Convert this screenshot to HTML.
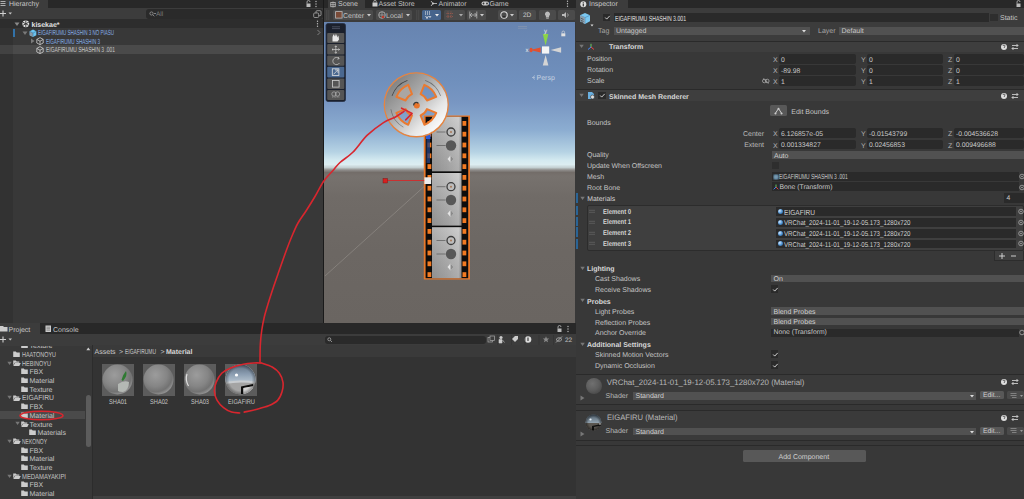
<!DOCTYPE html>
<html><head><meta charset="utf-8">
<style>
*{margin:0;padding:0;box-sizing:border-box}
html,body{width:1024px;height:499px;overflow:hidden;background:#1a1a1a;font-family:"Liberation Sans",sans-serif;font-size:7px;color:#c4c4c4;text-rendering:geometricPrecision}
.a{position:absolute}
.t{position:absolute;white-space:nowrap;line-height:1}
svg{position:absolute;overflow:visible}
</style></head><body>

<div class="a" style="left:0px;top:0px;width:323px;height:323px;background:#383838;"></div>
<div class="a" style="left:0px;top:0px;width:323px;height:8px;background:#282828;"></div>
<div class="a" style="left:0px;top:0px;width:48px;height:8px;background:#3c3c3c;"></div>
<svg style="left:0;top:0" width="8" height="8"><path d="M0.5 1.5h5M0.5 3.5h5M0.5 5.5h5" stroke="#bbb" stroke-width="0.9"/></svg>
<div class="t" style="left:9px;top:1.35px;font-size:7px;color:#c8c8c8;font-weight:400;">Hierarchy</div>
<svg style="left:305px;top:0" width="20" height="8"><path d="M2 3.5v-1.5a1.5 1.5 0 0 1 3 0" stroke="#bbb" stroke-width="0.8" fill="none"/><rect x="1.5" y="3.5" width="4" height="3.5" fill="#bbb"/><circle cx="11" cy="1.5" r="0.7" fill="#bbb"/><circle cx="11" cy="4" r="0.7" fill="#bbb"/><circle cx="11" cy="6.5" r="0.7" fill="#bbb"/></svg>
<div class="a" style="left:0px;top:8px;width:323px;height:11px;background:#3c3c3c;"></div>
<svg style="left:0;top:9px" width="14" height="10"><path d="M0 4.5h6M3 1.5v6" stroke="#d0d0d0" stroke-width="1.1"/><path d="M8.5 3.5h3.5l-1.75 2z" fill="#c8c8c8"/></svg>
<div class="a" style="left:146px;top:9px;width:177px;height:9.5px;background:#2a2a2a;border-radius:3px"></div>
<svg style="left:149px;top:11px" width="8" height="6"><circle cx="2.5" cy="2.5" r="1.6" stroke="#999" stroke-width="0.8" fill="none"/><path d="M3.8 3.8l1.5 1.5M5 2.5h2" stroke="#999" stroke-width="0.8"/></svg>
<div class="t" style="left:156px;top:11.92px;font-size:6.5px;color:#7a7a7a;font-weight:400;">All</div>
<svg style="left:313px;top:10px" width="9" height="8"><rect x="3" y="0.7" width="5" height="5" stroke="#aaa" stroke-width="0.8" fill="none" rx="1"/><rect x="0.7" y="3" width="5" height="4.5" stroke="#aaa" stroke-width="0.8" fill="#2a2a2a" rx="1"/></svg>
<div class="a" style="left:0px;top:19px;width:323px;height:8.5px;background:#2d2d2d;"></div>
<div class="a" style="left:0px;top:44.7px;width:323px;height:9px;background:#4a4a4a;"></div>
<div class="a" style="left:0px;top:27.5px;width:13px;height:295.5px;background:rgba(0,0,0,0.1);"></div>
<svg style="left:14px;top:21px" width="6" height="6"><path d="M0.5 1.5h5l-2.5 3.5z" fill="#8a8a8a"/></svg>
<svg style="left:22px;top:20px" width="8" height="8"><circle cx="3.8" cy="3.8" r="3.4" fill="#e8e8e8"/><path d="M3.8 0.6v6.4M0.8 2.2l6 3.2M0.8 5.4l6-3.2" stroke="#333" stroke-width="0.9"/></svg>
<div class="t" style="left:31.5px;top:21.55px;font-size:7px;color:#e4e4e4;font-weight:700;">kisekae*</div>
<svg style="left:315.5px;top:20px" width="4" height="8"><circle cx="1.5" cy="1.3" r="0.7" fill="#bbb"/><circle cx="1.5" cy="3.8" r="0.7" fill="#bbb"/><circle cx="1.5" cy="6.3" r="0.7" fill="#bbb"/></svg>
<div class="a" style="left:13.3px;top:29px;width:1.3px;height:7.5px;background:#3272a8;"></div>
<svg style="left:22px;top:30px" width="6" height="6"><path d="M0.5 1.5h5l-2.5 3.5z" fill="#7a7a7a"/></svg>
<svg style="left:29px;top:28.5px" width="8" height="8"><path d="M4 0.5l3.3 1.8v3.9L4 8 0.7 6.2V2.3z" fill="#6cc4f0"/><path d="M0.7 2.3L4 4.1V8L0.7 6.2z" fill="#8a9aa8"/><path d="M0.7 2.3L4 4.1l3.3-1.8M4 4.1V8" stroke="#2f6f9c" stroke-width="0.5" fill="none"/></svg>
<svg style="left:38px;top:0px" width="78" height="38.06"><text x="0" y="35.06" textLength="76" lengthAdjust="spacingAndGlyphs" font-family="Liberation Sans" font-size="7.4" font-weight="400" fill="#86aee6">EIGAFIRUMU  SHASHIN 3 NO PIASU</text></svg>
<svg style="left:316px;top:29px" width="6" height="7"><path d="M1.5 1l2.5 2.5-2.5 2.5" stroke="#888" stroke-width="0.9" fill="none"/></svg>
<svg style="left:30px;top:38px" width="6" height="6"><path d="M1 0.5v5l3.5-2.5z" fill="#7a7a7a"/></svg>
<svg style="left:36px;top:37px" width="8" height="8"><path d="M4 0.6l3.2 1.8v3.6L4 7.6 0.8 6V2.4z M0.8 2.4L4 4.2l3.2-1.8M4 4.2v3.4" stroke="#d0d0d0" stroke-width="0.8" fill="none"/></svg>
<svg style="left:46px;top:0px" width="56" height="46.66"><text x="0" y="43.66" textLength="54" lengthAdjust="spacingAndGlyphs" font-family="Liberation Sans" font-size="7.4" font-weight="400" fill="#86aee6">EIGAFIRUMU  SHASHIN 3</text></svg>
<svg style="left:36px;top:45.5px" width="8" height="8"><path d="M4 0.6l3.2 1.8v3.6L4 7.6 0.8 6V2.4z M0.8 2.4L4 4.2l3.2-1.8M4 4.2v3.4" stroke="#d0d0d0" stroke-width="0.8" fill="none"/></svg>
<svg style="left:46px;top:0px" width="71" height="55.36"><text x="0" y="52.36" textLength="69" lengthAdjust="spacingAndGlyphs" font-family="Liberation Sans" font-size="7.4" font-weight="400" fill="#c8c8c8">EIGAFIRUMU  SHASHIN 3 .001</text></svg>
<div class="a" style="left:324px;top:0px;width:252px;height:323px;background:#383838;"></div>
<div class="a" style="left:324px;top:0px;width:252px;height:8px;background:#282828;"></div>
<div class="a" style="left:328.4px;top:0px;width:36.6px;height:8px;background:#3c3c3c;"></div>
<svg style="left:329.5px;top:0.5px" width="6" height="7"><rect x="0.8" y="1.5" width="4.4" height="4.2" fill="none" stroke="#bbb" stroke-width="0.8"/><path d="M3 0.5v6M0.3 3.6h5.4" stroke="#bbb" stroke-width="0.7"/></svg>
<div class="t" style="left:338px;top:1.35px;font-size:7px;color:#c8c8c8;font-weight:400;">Scene</div>
<svg style="left:372px;top:0" width="6" height="7"><path d="M0.5 2.5h5v4h-5z" fill="#ccc"/><path d="M1.8 2.5v-1a1.2 1.2 0 0 1 2.4 0v1" stroke="#ccc" stroke-width="0.7" fill="none"/></svg>
<div class="t" style="left:378.5px;top:1.35px;font-size:7px;color:#c0c0c0;font-weight:400;">Asset Store</div>
<svg style="left:430px;top:0" width="8" height="7"><path d="M1 1l2 2.5M3 3.5L1 6M3 3.5h4" stroke="#ccc" stroke-width="0.8" fill="none"/><circle cx="3" cy="3.5" r="1" fill="#ccc"/></svg>
<div class="t" style="left:438.5px;top:1.35px;font-size:7px;color:#c0c0c0;font-weight:400;">Animator</div>
<svg style="left:481px;top:0" width="9" height="7"><rect x="0.5" y="1.5" width="7.5" height="4" rx="2" fill="#ccc"/><circle cx="2.5" cy="3.5" r="0.9" fill="#333"/><circle cx="6" cy="3.5" r="0.9" fill="#333"/></svg>
<div class="t" style="left:489.5px;top:1.35px;font-size:7px;color:#c0c0c0;font-weight:400;">Game</div>
<svg style="left:566px;top:0" width="4" height="8"><circle cx="1.5" cy="1.3" r="0.7" fill="#bbb"/><circle cx="1.5" cy="3.8" r="0.7" fill="#bbb"/><circle cx="1.5" cy="6.3" r="0.7" fill="#bbb"/></svg>
<div class="a" style="left:324px;top:8px;width:252px;height:14px;background:#3c3c3c;"></div>
<svg style="left:326px;top:10px" width="4" height="10"><path d="M0.8 0v10M2.8 0v10" stroke="#555" stroke-width="0.7"/></svg>
<div class="a" style="left:333px;top:9.5px;width:40px;height:10.5px;background:#4b4b4b;border-radius:1.5px"></div>
<svg style="left:335px;top:11px" width="8" height="8"><rect x="0.6" y="0.6" width="6.5" height="6.5" stroke="#bbb" stroke-width="0.8" fill="#7a4b38"/></svg>
<div class="t" style="left:343px;top:12.95px;font-size:7px;color:#c0c0c0;font-weight:400;">Center</div>
<svg style="left:367px;top:13.5px" width="5" height="3"><path d="M0 0h4l-2 2.5z" fill="#ccc"/></svg>
<div class="a" style="left:375.5px;top:9.5px;width:36.5px;height:10.5px;background:#4b4b4b;border-radius:1.5px"></div>
<svg style="left:377.5px;top:10.5px" width="9" height="9"><circle cx="4" cy="4" r="3.3" stroke="#bbb" stroke-width="0.8" fill="none"/><path d="M1 4h6M4 1v6" stroke="#bbb" stroke-width="0.6"/><circle cx="5" cy="6" r="1.3" fill="#c0392b"/></svg>
<div class="t" style="left:386px;top:12.95px;font-size:7px;color:#c0c0c0;font-weight:400;">Local</div>
<svg style="left:406px;top:13.5px" width="5" height="3"><path d="M0 0h4l-2 2.5z" fill="#ccc"/></svg>
<svg style="left:416px;top:10px" width="4" height="10"><path d="M0.8 0v10M2.8 0v10" stroke="#555" stroke-width="0.7"/></svg>
<div class="a" style="left:422px;top:9.5px;width:19px;height:10.5px;background:#46648c;border-radius:1.5px"></div>
<svg style="left:424px;top:11px" width="8" height="8"><path d="M1 1h1M3 1h1M5 1h1M1 3h1M3 3h1M5 3h1" stroke="#eee" stroke-width="1"/><path d="M1.5 5l1.5 2 1.5-2M3 7v1M5 5l1 1.5 1-1.5" stroke="#eee" stroke-width="0.8" fill="none"/></svg>
<svg style="left:435px;top:13.5px" width="5" height="3"><path d="M0 0h4l-2 2.5z" fill="#eee"/></svg>
<div class="a" style="left:444px;top:9.5px;width:21px;height:10.5px;background:#4b4b4b;border-radius:1.5px"></div>
<svg style="left:446px;top:11px" width="8" height="8"><path d="M2 0.5v7M5 0.5v7M0.5 2.5h7M0.5 5.5h7" stroke="#b06050" stroke-width="0.7" stroke-dasharray="1 0.8"/></svg>
<svg style="left:459px;top:13.5px" width="5" height="3"><path d="M0 0h4l-2 2.5z" fill="#aaa"/></svg>
<div class="a" style="left:467px;top:9.5px;width:19px;height:10.5px;background:#4b4b4b;border-radius:1.5px"></div>
<svg style="left:469px;top:11px" width="9" height="8"><path d="M0.8 0.5v7M7.8 0.5v7M0.8 4h7M3 2l-2 2 2 2M5.6 2l2 2-2 2" stroke="#bbb" stroke-width="0.8" fill="none"/></svg>
<svg style="left:480px;top:13.5px" width="5" height="3"><path d="M0 0h4l-2 2.5z" fill="#ccc"/></svg>
<div class="a" style="left:497.5px;top:9.5px;width:19.0px;height:10.5px;background:#4b4b4b;border-radius:1.5px"></div>
<svg style="left:499.5px;top:11px" width="9" height="8"><circle cx="4" cy="4" r="3.2" stroke="#ddd" stroke-width="1.1" fill="none"/><path d="M2 5.5a2.5 2.5 0 0 0 4 0" stroke="#555" stroke-width="1"/></svg>
<svg style="left:510px;top:13.5px" width="5" height="3"><path d="M0 0h4l-2 2.5z" fill="#ccc"/></svg>
<div class="a" style="left:518.7px;top:9.5px;width:17.699999999999932px;height:10.5px;background:#4b4b4b;border-radius:1.5px"></div>
<div class="t" style="left:523px;top:13.22px;font-size:6.5px;color:#c8c8c8;font-weight:400;">2D</div>
<div class="a" style="left:538.5px;top:9.5px;width:17.100000000000023px;height:10.5px;background:#4b4b4b;border-radius:1.5px"></div>
<svg style="left:543.5px;top:11px" width="7" height="8"><path d="M3.5 0.5a2.6 2.6 0 0 1 1.6 4.6v1.4H1.9V5.1A2.6 2.6 0 0 1 3.5 0.5z" fill="#bbb"/><path d="M2.2 7.3h2.6" stroke="#bbb" stroke-width="0.8"/></svg>
<div class="a" style="left:557.6px;top:9.5px;width:17.100000000000023px;height:10.5px;background:#4b4b4b;border-radius:1.5px"></div>
<svg style="left:561px;top:11px" width="10" height="8"><path d="M1 3h2l2-2v6L3 5H1z" fill="#bbb"/><path d="M6.5 2.5q1.5 1.5 0 3" stroke="#bbb" stroke-width="0.7" fill="none"/></svg>
<div class="a" style="left:324px;top:22px;width:251px;height:301px;overflow:hidden;background:linear-gradient(#6784b0 0px,#7090bd 60px,#7896c2 80px,#8cadd1 108px,#b6d3e4 130px,#d3e9f0 138px,#dcedf1 142.5px,#c4d0d2 145.5px,#8f8d8b 148px,#736d69 150.5px,#77726e 154px,#706b67 175px,#6c6763 230px,#6a6561 301px)">
</div>
<svg style="left:0;top:0" width="1024" height="499" viewBox="0 0 1024 499"><defs><linearGradient id="disc" x1="0.1" y1="0.1" x2="0.9" y2="0.9"><stop offset="0" stop-color="#7e7e7e"/><stop offset="0.4" stop-color="#ababab"/><stop offset="0.75" stop-color="#e6e6e6"/><stop offset="1" stop-color="#ffffff"/></linearGradient><linearGradient id="frame" x1="0" y1="0" x2="1" y2="0"><stop offset="0" stop-color="#a4a4a4"/><stop offset="0.5" stop-color="#b4b4b4"/><stop offset="0.9" stop-color="#c4c4c4"/><stop offset="1" stop-color="#9a9a9a"/></linearGradient><linearGradient id="framev" x1="0" y1="0" x2="0" y2="1"><stop offset="0" stop-color="#fff" stop-opacity="0.15"/><stop offset="1" stop-color="#000" stop-opacity="0.12"/></linearGradient></defs><path d="M428 183L325 276" stroke="#a9a49f" stroke-width="0.6" opacity="0.7"/><rect x="423.8" y="115.5" width="46.2" height="164" fill="#e8792c"/><rect x="425.6" y="116.8" width="42.6" height="161.4" fill="#0c0c0c"/><rect x="432" y="116.8" width="29.5" height="54.500000000000014" fill="url(#frame)"/><rect x="432" y="116.8" width="29.5" height="54.500000000000014" fill="url(#framev)"/><rect x="432" y="173" width="29.5" height="52.599999999999994" fill="url(#frame)"/><rect x="432" y="173" width="29.5" height="52.599999999999994" fill="url(#framev)"/><rect x="432" y="227.2" width="29.5" height="51.0" fill="url(#frame)"/><rect x="432" y="227.2" width="29.5" height="51.0" fill="url(#framev)"/><path d="M436.5 132h9M436.5 145.5h9" stroke="#4a4a4a" stroke-width="0.6"/><circle cx="451" cy="132" r="4" fill="#bcbcbc" stroke="#3c3c3c" stroke-width="1.3"/><circle cx="451" cy="132" r="1" fill="#a87858"/><circle cx="451" cy="145.5" r="5.2" fill="#575757"/><path d="M450.5 155.5l3 3.5-3 3.5-3-3.5z" fill="#e4e4e4"/><path d="M450.5 155.5l3 3.5-3 3.5z" fill="#8a8a8a"/><path d="M436.5 186.7h9M436.5 200h9" stroke="#4a4a4a" stroke-width="0.6"/><circle cx="451" cy="186.7" r="4" fill="#bcbcbc" stroke="#3c3c3c" stroke-width="1.3"/><circle cx="451" cy="186.7" r="1" fill="#a87858"/><circle cx="451" cy="200" r="5.2" fill="#575757"/><path d="M450.5 209.9l3 3.5-3 3.5-3-3.5z" fill="#e4e4e4"/><path d="M450.5 209.9l3 3.5-3 3.5z" fill="#8a8a8a"/><path d="M436.5 240.5h9M436.5 254h9" stroke="#4a4a4a" stroke-width="0.6"/><circle cx="451" cy="240.5" r="4" fill="#bcbcbc" stroke="#3c3c3c" stroke-width="1.3"/><circle cx="451" cy="240.5" r="1" fill="#a87858"/><circle cx="451" cy="254" r="5.2" fill="#575757"/><path d="M450.5 263.5l3 3.5-3 3.5-3-3.5z" fill="#e4e4e4"/><path d="M450.5 263.5l3 3.5-3 3.5z" fill="#8a8a8a"/><rect x="427.5" y="121.00" width="3.8" height="4.8" fill="#f27a22"/><rect x="462.5" y="121.00" width="3.8" height="4.8" fill="#f27a22"/><rect x="427.5" y="131.80" width="3.8" height="4.8" fill="#f27a22"/><rect x="462.5" y="131.80" width="3.8" height="4.8" fill="#f27a22"/><rect x="427.5" y="142.60" width="3.8" height="4.8" fill="#f27a22"/><rect x="462.5" y="142.60" width="3.8" height="4.8" fill="#f27a22"/><rect x="427.5" y="153.40" width="3.8" height="4.8" fill="#f27a22"/><rect x="462.5" y="153.40" width="3.8" height="4.8" fill="#f27a22"/><rect x="427.5" y="164.20" width="3.8" height="4.8" fill="#f27a22"/><rect x="462.5" y="164.20" width="3.8" height="4.8" fill="#f27a22"/><rect x="427.5" y="175.00" width="3.8" height="4.8" fill="#f27a22"/><rect x="462.5" y="175.00" width="3.8" height="4.8" fill="#f27a22"/><rect x="427.5" y="185.80" width="3.8" height="4.8" fill="#f27a22"/><rect x="462.5" y="185.80" width="3.8" height="4.8" fill="#f27a22"/><rect x="427.5" y="196.60" width="3.8" height="4.8" fill="#f27a22"/><rect x="462.5" y="196.60" width="3.8" height="4.8" fill="#f27a22"/><rect x="427.5" y="207.40" width="3.8" height="4.8" fill="#f27a22"/><rect x="462.5" y="207.40" width="3.8" height="4.8" fill="#f27a22"/><rect x="427.5" y="218.20" width="3.8" height="4.8" fill="#f27a22"/><rect x="462.5" y="218.20" width="3.8" height="4.8" fill="#f27a22"/><rect x="427.5" y="229.00" width="3.8" height="4.8" fill="#f27a22"/><rect x="462.5" y="229.00" width="3.8" height="4.8" fill="#f27a22"/><rect x="427.5" y="239.80" width="3.8" height="4.8" fill="#f27a22"/><rect x="462.5" y="239.80" width="3.8" height="4.8" fill="#f27a22"/><rect x="427.5" y="250.60" width="3.8" height="4.8" fill="#f27a22"/><rect x="462.5" y="250.60" width="3.8" height="4.8" fill="#f27a22"/><rect x="427.5" y="261.40" width="3.8" height="4.8" fill="#f27a22"/><rect x="462.5" y="261.40" width="3.8" height="4.8" fill="#f27a22"/><rect x="427.5" y="272.20" width="3.8" height="4.8" fill="#f27a22"/><rect x="462.5" y="272.20" width="3.8" height="4.8" fill="#f27a22"/><rect x="426" y="134" width="4.5" height="5" fill="#2a5ad8"/><rect x="426.5" y="139" width="3.5" height="24" fill="#24407a" opacity="0.8"/><path d="M386 180.5H426" stroke="#d42a2a" stroke-width="0.9"/><rect x="383" y="178.5" width="4.5" height="4.5" fill="#d62020" stroke="#701010" stroke-width="0.4"/><rect x="424.4" y="177.3" width="6.8" height="6.7" fill="#ececec"/><circle cx="416.3" cy="104.8" r="31.9" fill="none" stroke="#e8843e" stroke-width="1.5"/><path d="M385.1 104.8a31.2 31.2 0 1 0 62.4 0a31.2 31.2 0 1 0 -62.4 0zM436.23 96.75A21.5 21.5 0 0 0 424.35 84.87L420.61 94.14A11.5 11.5 0 0 1 426.96 100.49zM396.37 112.85A21.5 21.5 0 0 0 408.25 124.73L411.99 115.46A11.5 11.5 0 0 1 405.64 109.11zM424.35 124.73A21.5 21.5 0 0 0 436.23 112.85L426.96 109.11A11.5 11.5 0 0 1 420.61 115.46z" fill="url(#disc)" fill-rule="evenodd"/><path d="M436.23 96.75A21.5 21.5 0 0 0 424.35 84.87L420.61 94.14A11.5 11.5 0 0 1 426.96 100.49z" fill="none" stroke="#ea7a30" stroke-width="2" stroke-linejoin="round"/><path d="M408.25 84.87A21.5 21.5 0 0 0 396.37 96.75L405.64 100.49A11.5 11.5 0 0 1 411.99 94.14z" fill="#aaa6a2" stroke="#ea7a30" stroke-width="2" stroke-linejoin="round"/><path d="M396.37 112.85A21.5 21.5 0 0 0 408.25 124.73L411.99 115.46A11.5 11.5 0 0 1 405.64 109.11z" fill="none" stroke="#ea7a30" stroke-width="2" stroke-linejoin="round"/><path d="M424.35 124.73A21.5 21.5 0 0 0 436.23 112.85L426.96 109.11A11.5 11.5 0 0 1 420.61 115.46z" fill="none" stroke="#ea7a30" stroke-width="2" stroke-linejoin="round"/><path d="M407.30 80.09A26.3 26.3 0 0 0 391.59 95.80L392.34 96.08A25.5 25.5 0 0 1 407.58 80.84z" fill="#444"/><path d="M441.01 95.80A26.3 26.3 0 0 0 425.30 80.09L425.02 80.84A25.5 25.5 0 0 1 440.26 96.08z" fill="#444" opacity="0.6"/><path d="M390.50 109.35A26.2 26.2 0 0 0 403.20 127.49L403.55 126.88A25.5 25.5 0 0 1 391.19 109.23z" fill="#444" opacity="0.6"/><circle cx="416.8" cy="105.6" r="3" fill="#e8742a"/><path d="M413.7 105.39999999999999a2.6 2.6 0 0 1 4.6 -2" stroke="#3a3a3a" stroke-width="1.4" fill="none"/><rect x="326" y="23.5" width="19.5" height="78" rx="2" fill="#1b202c" stroke="#263044" stroke-width="0.8"/><path d="M332 26.8h8M332 28.6h8" stroke="#5a6272" stroke-width="0.7"/><rect x="327.2" y="33" width="17.1" height="10" rx="1" fill="#585858"/><rect x="327.2" y="44" width="17.1" height="10.5" rx="1" fill="#555555"/><rect x="327.2" y="55.6" width="17.1" height="10.199999999999996" rx="1" fill="#555555"/><rect x="327.2" y="66.7" width="17.1" height="10.799999999999997" rx="1" fill="#4a6890"/><rect x="327.2" y="78.5" width="17.1" height="10.5" rx="1" fill="#555555"/><rect x="327.2" y="90" width="17.1" height="10" rx="1" fill="#555555"/><path d="M332.5 41.5v-4.5l1-3 1 2.5 0.5-3 1 3 0.8-2.5 0.7 3.5 1-2 0.5 4-1.5 2z" fill="#e8e8e8"/><path d="M335.8 45.8v7.5M332 49.5h7.6M335.8 45.8l-1 1.2M335.8 45.8l1 1.2M335.8 53.3l-1-1.2M335.8 53.3l1-1.2M332 49.5l1.2-1M332 49.5l1.2 1M339.6 49.5l-1.2-1M339.6 49.5l-1.2 1" stroke="#d0d0d0" stroke-width="0.7" fill="none"/><path d="M339 58.5a3.6 3.6 0 1 0 0.5 4.5M338 57l1.2 1.6-1.8 0.6" stroke="#d0d0d0" stroke-width="0.7" fill="none"/><rect x="332.3" y="68.8" width="6.6" height="6.6" stroke="#e0e0e0" stroke-width="0.8" fill="none"/><path d="M333.5 74.3l4.4-4.4M335 69.9h3v3" stroke="#e0e0e0" stroke-width="0.8" fill="none"/><rect x="332.5" y="80.5" width="6.6" height="6.6" stroke="#d0d0d0" stroke-width="0.8" fill="none"/><circle cx="334" cy="94" r="2.2" stroke="#c0c0c0" stroke-width="0.6" fill="none"/><circle cx="337.5" cy="94" r="2.2" stroke="#c0c0c0" stroke-width="0.6" fill="none"/><path d="M332 97h8" stroke="#c0c0c0" stroke-width="0.6" stroke-dasharray="1 0.6"/><path d="M518 26.5h9M518 28.3h9" stroke="#8797b0" stroke-width="0.7"/><path d="M542.8000000000001 34L548.4 34L545.6 45.5z" fill="#8ad448"/><path d="M530.1 50L540.6 47.5L540.6 52.5z" fill="#e2502e"/><ellipse cx="531.1" cy="50" rx="1.6" ry="2.3" fill="#e2502e"/><path d="M561.1 47.2L561.1 52.8L550.6 50z" fill="#d4d4d4"/><path d="M542.8000000000001 65.5L548.4 65.5L545.6 55z" fill="#d4d4d4"/><rect x="542.0" y="46.4" width="7.2" height="7.2" fill="#f4f4f4"/><text x="545.6" y="33.2" font-size="6" fill="#eaeaea" text-anchor="middle" font-family="Liberation Sans">y</text><text x="527.1" y="52" font-size="6" fill="#eaeaea" text-anchor="middle" font-family="Liberation Sans">x</text><rect x="561.3" y="33.3" width="4" height="3" fill="#e0e0e0"/><path d="M562 33.3v-1a1.3 1.3 0 0 1 2.6 0v1" stroke="#e0e0e0" stroke-width="0.6" fill="none"/><path d="M535 77.5l-2.5 0M535 75.5l-2.5 2 2.5 2" stroke="#c5d0e0" stroke-width="0.6" fill="none"/><text x="536.5" y="80" font-size="7" fill="#c5d0e0" font-family="Liberation Sans">Persp</text></svg>
<div class="a" style="left:0px;top:323px;width:576px;height:176px;background:#383838;"></div>
<div class="a" style="left:0px;top:323px;width:576px;height:11px;background:#282828;"></div>
<div class="a" style="left:0px;top:323px;width:40px;height:11px;background:#3c3c3c;"></div>
<svg style="left:0;top:325px" width="8" height="7"><path d="M0 1h3l1 1h3.5v4.5H0z" fill="#ccc"/></svg>
<div class="t" style="left:8.5px;top:327.25px;font-size:7px;color:#c8c8c8;font-weight:400;">Project</div>
<svg style="left:44.5px;top:325px" width="7" height="8"><rect x="0.5" y="0.5" width="5.5" height="6.5" fill="#ccc"/><path d="M1.5 2.2h3.5M1.5 3.7h3.5M1.5 5.2h3.5" stroke="#666" stroke-width="0.6"/></svg>
<div class="t" style="left:53px;top:327.25px;font-size:7px;color:#c0c0c0;font-weight:400;">Console</div>
<svg style="left:556px;top:325px" width="16" height="8"><path d="M2 3.5v-1.5a1.5 1.5 0 0 1 3 0" stroke="#bbb" stroke-width="0.8" fill="none"/><rect x="1.5" y="3.5" width="4" height="3.5" fill="#bbb"/><circle cx="12" cy="1.5" r="0.7" fill="#bbb"/><circle cx="12" cy="4" r="0.7" fill="#bbb"/><circle cx="12" cy="6.5" r="0.7" fill="#bbb"/></svg>
<div class="a" style="left:0px;top:334px;width:576px;height:11px;background:#3c3c3c;"></div>
<svg style="left:0;top:335px" width="14" height="10"><path d="M0 4.5h6M3 1.5v6" stroke="#d0d0d0" stroke-width="1.1"/><path d="M8.5 3.5h3.5l-1.75 2z" fill="#c8c8c8"/></svg>
<div class="a" style="left:325px;top:335.5px;width:161px;height:8.5px;background:#2a2a2a;border-radius:3px"></div>
<svg style="left:327px;top:337px" width="6" height="6"><circle cx="2.3" cy="2.3" r="1.5" stroke="#aaa" stroke-width="0.8" fill="none"/><path d="M3.4 3.4l1.6 1.6" stroke="#aaa" stroke-width="0.8"/></svg>
<svg style="left:487px;top:335px" width="90" height="10"><rect x="1" y="2.5" width="4.5" height="4.5" stroke="#aaa" stroke-width="0.7" fill="none"/><rect x="3" y="1" width="4.5" height="4.5" stroke="#aaa" stroke-width="0.7" fill="#3c3c3c"/><circle cx="14" cy="2.5" r="1.6" fill="#ccc"/><path d="M12 4.5h3v3.5h-3zM15.5 5l2 2.5" fill="#ccc" stroke="#ccc" stroke-width="0.6"/><path d="M25 4l3-3h3v3l-3 3z" fill="#ccc"/><circle cx="41" cy="4.5" r="3.3" fill="#ddd"/><rect x="40.3" y="2.5" width="1.4" height="3.5" fill="#555"/><path d="M59 1.2l0.9 2.2 2.3 0.1-1.8 1.4 0.7 2.3-2.1-1.3-2.1 1.3 0.7-2.3-1.8-1.4 2.3-0.1z" fill="#8a8a8a"/><path d="M69 4.5q3-3.5 6 0q-3 3.5-6 0z" stroke="#bbb" stroke-width="0.8" fill="none"/><path d="M69 7.5l6-6" stroke="#bbb" stroke-width="0.8"/><path d="M10.6 0v11M24.5 0v11M38 0v11M52 0v11M66.5 0v11" stroke="#333" stroke-width="0.8"/></svg>
<div class="t" style="left:565px;top:337.53px;font-size:6.5px;color:#c0c0c0;font-weight:400;">22</div>
<div class="a" style="left:92px;top:345px;width:484px;height:12px;background:#3a3a3a;"></div>
<div class="a" style="left:92px;top:357px;width:484px;height:142px;background:#333333;"></div>
<div class="t" style="left:94.6px;top:348.75px;font-size:7px;color:#c8c8c8;font-weight:400;">Assets</div>
<div class="t" style="left:119px;top:348.75px;font-size:7px;color:#c8c8c8;font-weight:400;">&gt;</div>
<svg style="left:125px;top:0px" width="33" height="356.66"><text x="0" y="353.66" textLength="31" lengthAdjust="spacingAndGlyphs" font-family="Liberation Sans" font-size="7.4" font-weight="400" fill="#c8c8c8">EIGAFIRUMU</text></svg>
<div class="t" style="left:160.5px;top:348.75px;font-size:7px;color:#c8c8c8;font-weight:400;">&gt;</div>
<div class="t" style="left:166px;top:348.75px;font-size:7px;color:#d8d8d8;font-weight:700;">Material</div>
<div class="a" style="left:91.5px;top:345px;width:1px;height:154px;background:#2c2c2c;"></div>
<div class="a" style="left:92.5px;top:495.6px;width:483.5px;height:3.4px;background:#404040;"></div>
<div class="a" style="left:85.8px;top:395px;width:5.5px;height:51.5px;background:#5c5c5c;border-radius:2.75px"></div>
<svg style="left:86px;top:347px" width="5" height="4"><path d="M0.3 3.2h4l-2-2.8z" fill="#ccc"/></svg>
<div class="a" style="left:0px;top:410.7px;width:85px;height:8.7px;background:#4a4a4a;"></div>
<svg style="left:21px;top:341.9px" width="8" height="7"><path d="M0.2 0.6h2.6l0.9 0.9h3.1v4.6H0.2z" fill="#cccccc"/></svg>
<div class="t" style="left:29.5px;top:342.95px;font-size:7px;color:#c4c4c4;font-weight:400;">Texture</div>
<svg style="left:13px;top:351.0px" width="8" height="7"><path d="M0.2 0.6h2.6l0.9 0.9h3.1v4.6H0.2z" fill="#cccccc"/></svg>
<svg style="left:21.5px;top:0px" width="36" height="359.96"><text x="0" y="356.96" textLength="34" lengthAdjust="spacingAndGlyphs" font-family="Liberation Sans" font-size="7.4" font-weight="400" fill="#c4c4c4">HAATONOYU</text></svg>
<svg style="left:7px;top:360.5px" width="6" height="5"><path d="M0.3 0.8h4.5l-2.25 3.2z" fill="#777"/></svg>
<svg style="left:13px;top:359.7px" width="8" height="7"><path d="M0.2 0.6h2.6l0.9 0.9h2.6v1.2H1.6L0.2 5.5z" fill="#cccccc"/><path d="M1.9 3.1h5.9L6.3 6.1H0.3z" fill="#cccccc"/></svg>
<svg style="left:21.5px;top:0px" width="31" height="368.66"><text x="0" y="365.66" textLength="29" lengthAdjust="spacingAndGlyphs" font-family="Liberation Sans" font-size="7.4" font-weight="400" fill="#c4c4c4">HEBINOYU</text></svg>
<svg style="left:21px;top:368.4px" width="8" height="7"><path d="M0.2 0.6h2.6l0.9 0.9h3.1v4.6H0.2z" fill="#cccccc"/></svg>
<div class="t" style="left:29.5px;top:369.45px;font-size:7px;color:#c4c4c4;font-weight:400;">FBX</div>
<svg style="left:21px;top:377.09999999999997px" width="8" height="7"><path d="M0.2 0.6h2.6l0.9 0.9h3.1v4.6H0.2z" fill="#cccccc"/></svg>
<div class="t" style="left:29.5px;top:378.15px;font-size:7px;color:#c4c4c4;font-weight:400;">Material</div>
<svg style="left:21px;top:385.8px" width="8" height="7"><path d="M0.2 0.6h2.6l0.9 0.9h3.1v4.6H0.2z" fill="#cccccc"/></svg>
<div class="t" style="left:29.5px;top:386.85px;font-size:7px;color:#c4c4c4;font-weight:400;">Texture</div>
<svg style="left:7px;top:395.3px" width="6" height="5"><path d="M0.3 0.8h4.5l-2.25 3.2z" fill="#777"/></svg>
<svg style="left:13px;top:394.5px" width="8" height="7"><path d="M0.2 0.6h2.6l0.9 0.9h2.6v1.2H1.6L0.2 5.5z" fill="#cccccc"/><path d="M1.9 3.1h5.9L6.3 6.1H0.3z" fill="#cccccc"/></svg>
<svg style="left:21.5px;top:0px" width="34" height="403.46"><text x="0" y="400.46" textLength="32" lengthAdjust="spacingAndGlyphs" font-family="Liberation Sans" font-size="7.4" font-weight="400" fill="#c4c4c4">EIGAFIRU</text></svg>
<svg style="left:21px;top:403.09999999999997px" width="8" height="7"><path d="M0.2 0.6h2.6l0.9 0.9h3.1v4.6H0.2z" fill="#cccccc"/></svg>
<div class="t" style="left:29.5px;top:404.15px;font-size:7px;color:#c4c4c4;font-weight:400;">FBX</div>
<svg style="left:21px;top:411.8px" width="8" height="7"><path d="M0.2 0.6h2.6l0.9 0.9h3.1v4.6H0.2z" fill="#cccccc"/></svg>
<div class="t" style="left:29.5px;top:412.85px;font-size:7px;color:#c4c4c4;font-weight:400;">Material</div>
<svg style="left:15px;top:421.3px" width="6" height="5"><path d="M0.3 0.8h4.5l-2.25 3.2z" fill="#777"/></svg>
<svg style="left:21px;top:420.5px" width="8" height="7"><path d="M0.2 0.6h2.6l0.9 0.9h2.6v1.2H1.6L0.2 5.5z" fill="#cccccc"/><path d="M1.9 3.1h5.9L6.3 6.1H0.3z" fill="#cccccc"/></svg>
<div class="t" style="left:29.5px;top:421.55px;font-size:7px;color:#c4c4c4;font-weight:400;">Texture</div>
<svg style="left:29px;top:429.2px" width="8" height="7"><path d="M0.2 0.6h2.6l0.9 0.9h3.1v4.6H0.2z" fill="#cccccc"/></svg>
<div class="t" style="left:37.5px;top:430.25px;font-size:7px;color:#c4c4c4;font-weight:400;">Materials</div>
<svg style="left:7px;top:438.7px" width="6" height="5"><path d="M0.3 0.8h4.5l-2.25 3.2z" fill="#777"/></svg>
<svg style="left:13px;top:437.9px" width="8" height="7"><path d="M0.2 0.6h2.6l0.9 0.9h2.6v1.2H1.6L0.2 5.5z" fill="#cccccc"/><path d="M1.9 3.1h5.9L6.3 6.1H0.3z" fill="#cccccc"/></svg>
<svg style="left:21.5px;top:0px" width="27" height="446.86"><text x="0" y="443.86" textLength="25" lengthAdjust="spacingAndGlyphs" font-family="Liberation Sans" font-size="7.4" font-weight="400" fill="#c4c4c4">NEKONOY</text></svg>
<svg style="left:21px;top:446.59999999999997px" width="8" height="7"><path d="M0.2 0.6h2.6l0.9 0.9h3.1v4.6H0.2z" fill="#cccccc"/></svg>
<div class="t" style="left:29.5px;top:447.65px;font-size:7px;color:#c4c4c4;font-weight:400;">FBX</div>
<svg style="left:21px;top:455.3px" width="8" height="7"><path d="M0.2 0.6h2.6l0.9 0.9h3.1v4.6H0.2z" fill="#cccccc"/></svg>
<div class="t" style="left:29.5px;top:456.35px;font-size:7px;color:#c4c4c4;font-weight:400;">Material</div>
<svg style="left:21px;top:464.0px" width="8" height="7"><path d="M0.2 0.6h2.6l0.9 0.9h3.1v4.6H0.2z" fill="#cccccc"/></svg>
<div class="t" style="left:29.5px;top:465.05px;font-size:7px;color:#c4c4c4;font-weight:400;">Texture</div>
<svg style="left:7px;top:473.5px" width="6" height="5"><path d="M0.3 0.8h4.5l-2.25 3.2z" fill="#777"/></svg>
<svg style="left:13px;top:472.7px" width="8" height="7"><path d="M0.2 0.6h2.6l0.9 0.9h2.6v1.2H1.6L0.2 5.5z" fill="#cccccc"/><path d="M1.9 3.1h5.9L6.3 6.1H0.3z" fill="#cccccc"/></svg>
<svg style="left:21.5px;top:0px" width="46" height="481.66"><text x="0" y="478.66" textLength="44" lengthAdjust="spacingAndGlyphs" font-family="Liberation Sans" font-size="7.4" font-weight="400" fill="#c4c4c4">MEDAMAYAKIPI</text></svg>
<svg style="left:21px;top:481.4px" width="8" height="7"><path d="M0.2 0.6h2.6l0.9 0.9h3.1v4.6H0.2z" fill="#cccccc"/></svg>
<div class="t" style="left:29.5px;top:482.45px;font-size:7px;color:#c4c4c4;font-weight:400;">FBX</div>
<svg style="left:21px;top:490.09999999999997px" width="8" height="7"><path d="M0.2 0.6h2.6l0.9 0.9h3.1v4.6H0.2z" fill="#cccccc"/></svg>
<div class="t" style="left:29.5px;top:491.15px;font-size:7px;color:#c4c4c4;font-weight:400;">Material</div>
<svg style="left:21px;top:498.8px" width="8" height="7"><path d="M0.2 0.6h2.6l0.9 0.9h3.1v4.6H0.2z" fill="#cccccc"/></svg>
<div class="t" style="left:29.5px;top:499.85px;font-size:7px;color:#c4c4c4;font-weight:400;">Texture</div>
<div class="a" style="left:0px;top:334px;width:91.5px;height:11.5px;background:#3c3c3c;"></div>
<svg style="left:0;top:335px" width="14" height="10"><path d="M0 4.5h6M3 1.5v6" stroke="#d0d0d0" stroke-width="1.1"/><path d="M8.5 3.5h3.5l-1.75 2z" fill="#c8c8c8"/></svg>
<div class="a" style="left:102px;top:364px;width:32px;height:32px;background:#5c5c5c;"></div>
<svg style="left:102px;top:364px" width="32" height="32" viewBox="102 364 32 32"><defs><radialGradient id="g102" cx="0.4" cy="0.35" r="0.7"><stop offset="0" stop-color="#9c9c9c"/><stop offset="0.55" stop-color="#858585"/><stop offset="0.8" stop-color="#727272"/><stop offset="0.93" stop-color="#8e8e8e"/><stop offset="1" stop-color="#9a9a9a"/></radialGradient><clipPath id="c102"><circle cx="117.5" cy="379.5" r="15"/></clipPath><radialGradient id="rim102" cx="0.5" cy="0.5" r="0.5"><stop offset="0.75" stop-color="#000" stop-opacity="0"/><stop offset="1" stop-color="#000" stop-opacity="0.35"/></radialGradient><linearGradient id="sky102" x1="0" y1="0" x2="0" y2="1"><stop offset="0" stop-color="#5a6a7c"/><stop offset="0.55" stop-color="#8a9cb0"/><stop offset="1" stop-color="#b4c2ce"/></linearGradient></defs><circle cx="117.5" cy="379.5" r="15" fill="url(#g102)"/><path d="M126 371q2 4 -3 10l-1.5 -1q1 -5 4.5 -9z" fill="#2f7a32"/><path d="M118 384q6 -4 11 -2q0 8 -6 10q-4 0 -5 -1z" fill="#b4b8b4"/></svg>
<svg style="left:109.0px;top:0px" width="20" height="406.95"><text x="0" y="403.95" textLength="18" lengthAdjust="spacingAndGlyphs" font-family="Liberation Sans" font-size="6.8" font-weight="400" fill="#c4c4c4">SHA01</text></svg>
<div class="a" style="left:143px;top:364px;width:32px;height:32px;background:#5c5c5c;"></div>
<svg style="left:143px;top:364px" width="32" height="32" viewBox="143 364 32 32"><defs><radialGradient id="g143" cx="0.4" cy="0.35" r="0.7"><stop offset="0" stop-color="#9c9c9c"/><stop offset="0.55" stop-color="#858585"/><stop offset="0.8" stop-color="#727272"/><stop offset="0.93" stop-color="#8e8e8e"/><stop offset="1" stop-color="#9a9a9a"/></radialGradient><clipPath id="c143"><circle cx="158.5" cy="379.5" r="15"/></clipPath><radialGradient id="rim143" cx="0.5" cy="0.5" r="0.5"><stop offset="0.75" stop-color="#000" stop-opacity="0"/><stop offset="1" stop-color="#000" stop-opacity="0.35"/></radialGradient><linearGradient id="sky143" x1="0" y1="0" x2="0" y2="1"><stop offset="0" stop-color="#5a6a7c"/><stop offset="0.55" stop-color="#8a9cb0"/><stop offset="1" stop-color="#b4c2ce"/></linearGradient></defs><circle cx="158.5" cy="379.5" r="15" fill="url(#g143)"/></svg>
<svg style="left:150.0px;top:0px" width="20" height="406.95"><text x="0" y="403.95" textLength="18" lengthAdjust="spacingAndGlyphs" font-family="Liberation Sans" font-size="6.8" font-weight="400" fill="#c4c4c4">SHA02</text></svg>
<div class="a" style="left:184px;top:364px;width:32px;height:32px;background:#5c5c5c;"></div>
<svg style="left:184px;top:364px" width="32" height="32" viewBox="184 364 32 32"><defs><radialGradient id="g184" cx="0.4" cy="0.35" r="0.7"><stop offset="0" stop-color="#9c9c9c"/><stop offset="0.55" stop-color="#858585"/><stop offset="0.8" stop-color="#727272"/><stop offset="0.93" stop-color="#8e8e8e"/><stop offset="1" stop-color="#9a9a9a"/></radialGradient><clipPath id="c184"><circle cx="199.5" cy="379.5" r="15"/></clipPath><radialGradient id="rim184" cx="0.5" cy="0.5" r="0.5"><stop offset="0.75" stop-color="#000" stop-opacity="0"/><stop offset="1" stop-color="#000" stop-opacity="0.35"/></radialGradient><linearGradient id="sky184" x1="0" y1="0" x2="0" y2="1"><stop offset="0" stop-color="#5a6a7c"/><stop offset="0.55" stop-color="#8a9cb0"/><stop offset="1" stop-color="#b4c2ce"/></linearGradient></defs><circle cx="199.5" cy="379.5" r="15" fill="url(#g184)"/><path d="M187 374q-2 6 1.5 12" stroke="#e0e0e0" stroke-width="1.2" fill="none"/></svg>
<svg style="left:191.0px;top:0px" width="20" height="406.95"><text x="0" y="403.95" textLength="18" lengthAdjust="spacingAndGlyphs" font-family="Liberation Sans" font-size="6.8" font-weight="400" fill="#c4c4c4">SHA03</text></svg>
<div class="a" style="left:225px;top:364px;width:32px;height:32px;background:#5c5c5c;"></div>
<svg style="left:225px;top:364px" width="32" height="32" viewBox="225 364 32 32"><defs><radialGradient id="g225" cx="0.4" cy="0.35" r="0.7"><stop offset="0" stop-color="#9c9c9c"/><stop offset="0.55" stop-color="#858585"/><stop offset="0.8" stop-color="#727272"/><stop offset="0.93" stop-color="#8e8e8e"/><stop offset="1" stop-color="#9a9a9a"/></radialGradient><clipPath id="c225"><circle cx="240.5" cy="379.5" r="15"/></clipPath><radialGradient id="rim225" cx="0.5" cy="0.5" r="0.5"><stop offset="0.75" stop-color="#000" stop-opacity="0"/><stop offset="1" stop-color="#000" stop-opacity="0.35"/></radialGradient><linearGradient id="sky225" x1="0" y1="0" x2="0" y2="1"><stop offset="0" stop-color="#5a6a7c"/><stop offset="0.55" stop-color="#8a9cb0"/><stop offset="1" stop-color="#b4c2ce"/></linearGradient></defs><g clip-path="url(#c225)"><rect x="225" y="364" width="32" height="32" fill="#a4a4a4"/><rect x="225" y="364" width="32" height="18" fill="url(#sky225)"/><path d="M225 382q15.5 -3 32 0v2q-16 -3 -32 0z" fill="#c8ccd0"/><path d="M241 386.5l12-2.5v2.2l-9.6 1.8v6h-2.4z" fill="#0e0e0e"/><path d="M243.4 388l9.6-1.8v4l-7 4.5h-2.6z" fill="#d4d4d4"/><circle cx="240.5" cy="379.5" r="15" fill="url(#rim225)"/><rect x="225" y="364" width="32" height="32" fill="none"/></g><circle cx="236.5" cy="375" r="1.6" fill="#fff"/></svg>
<svg style="left:227.5px;top:0px" width="29" height="406.95"><text x="0" y="403.95" textLength="27" lengthAdjust="spacingAndGlyphs" font-family="Liberation Sans" font-size="6.8" font-weight="400" fill="#c4c4c4">EIGAFIRU</text></svg>
<div class="a" style="left:576px;top:0px;width:448px;height:499px;background:#383838;"></div>
<div class="a" style="left:576px;top:0px;width:448px;height:8px;background:#282828;"></div>
<div class="a" style="left:576px;top:0px;width:52px;height:8px;background:#3c3c3c;"></div>
<svg style="left:580px;top:0.5px" width="7" height="7"><circle cx="3.3" cy="3.3" r="3" fill="#ddd"/><rect x="2.7" y="2.6" width="1.2" height="2.8" fill="#333"/><rect x="2.7" y="1.3" width="1.2" height="0.9" fill="#333"/></svg>
<div class="t" style="left:589px;top:1.35px;font-size:7px;color:#c8c8c8;font-weight:400;">Inspector</div>
<svg style="left:1015px;top:0" width="8" height="8"><path d="M2 3.5v-1.5a1.5 1.5 0 0 1 3 0" stroke="#bbb" stroke-width="0.8" fill="none"/><rect x="1.5" y="3.5" width="4" height="3.5" fill="#bbb"/></svg>
<div class="a" style="left:576px;top:8px;width:448px;height:32.5px;background:#3c3c3c;"></div>
<svg style="left:579px;top:12px" width="16" height="16"><path d="M6 1l5 2.3v6L6 12 1 9.3v-6z" fill="#7cc8f0"/><path d="M1 3.3L6 5.6l5-2.3M6 5.6V12" stroke="#3f86b8" stroke-width="0.6" fill="none"/><path d="M1 3.3L6 5.6V12L1 9.3z" fill="#8aa0b0"/><path d="M1.5 6l3 1.5M1.5 8l3 1.5M2 9.8l2 1" stroke="#444" stroke-width="0.7"/><path d="M11.5 12.5h3l-1.5 2z" fill="#ddd"/></svg>
<div class="a" style="left:603px;top:13.5px;width:7px;height:7.5px;background:#2a2a2a;"></div>
<svg style="left:603.5px;top:14px" width="7" height="7"><path d="M1.2 3.5l1.5 1.6 3-3.2" stroke="#e0e0e0" stroke-width="0.9" fill="none"/></svg>
<div class="a" style="left:613.7px;top:13px;width:375.5px;height:9px;background:#2a2a2a;"></div>
<svg style="left:615px;top:0px" width="73" height="24.16"><text x="0" y="21.16" textLength="71" lengthAdjust="spacingAndGlyphs" font-family="Liberation Sans" font-size="7.4" font-weight="400" fill="#e0e0e0">EIGAFIRUMU  SHASHIN 3.001</text></svg>
<div class="a" style="left:990.3px;top:13.5px;width:7.7px;height:7.7px;background:#2e2e2e;"></div>
<div class="t" style="left:1000px;top:15.25px;font-size:7px;color:#c4c4c4;font-weight:400;">Static</div>
<div class="t" style="left:598px;top:27.75px;font-size:7px;color:#a8a8a8;font-weight:400;">Tag</div>
<div class="a" style="left:613.7px;top:26.5px;width:196px;height:8.5px;background:#515151;"></div>
<div class="t" style="left:616px;top:27.75px;font-size:7px;color:#c8c8c8;font-weight:400;">Untagged</div>
<svg style="left:802px;top:29.5px" width="5" height="3"><path d="M0 0h4l-2 2.5z" fill="#ddd"/></svg>
<div class="t" style="left:818px;top:27.75px;font-size:7px;color:#a8a8a8;font-weight:400;">Layer</div>
<div class="a" style="left:839px;top:26.5px;width:185px;height:8.5px;background:#515151;"></div>
<div class="t" style="left:841.5px;top:27.75px;font-size:7px;color:#c8c8c8;font-weight:400;">Default</div>
<div class="a" style="left:576px;top:40.5px;width:448px;height:1px;background:#2a2a2a;"></div>
<div class="a" style="left:576px;top:41.5px;width:448px;height:10px;background:#3e3e3e;"></div>
<svg style="left:579px;top:44px" width="6" height="5"><path d="M0.3 0.8h4.5l-2.25 3.2z" fill="#777"/></svg>
<svg style="left:587px;top:42.5px" width="8" height="8"><path d="M4 4V0.8" stroke="#6c6" stroke-width="1"/><path d="M4 4l-3 2.5" stroke="#48f" stroke-width="1"/><path d="M4 4l3 2.5" stroke="#e44" stroke-width="1"/></svg>
<div class="t" style="left:609px;top:44.25px;font-size:7px;color:#d8d8d8;font-weight:700;">Transform</div>
<svg style="left:1000px;top:42.5px" width="22" height="8"><circle cx="4" cy="4" r="3" fill="#ddd"/><path d="M3 3a1 1 0 1 1 1.3 1v0.8" stroke="#333" stroke-width="0.8" fill="none"/><path d="M12 2.5h6M16.5 1l1.5 1.5-1.5 1.5M18 5.5h-6M13.5 4l-1.5 1.5 1.5 1.5" stroke="#ddd" stroke-width="0.8" fill="none"/></svg>
<div class="t" style="left:587px;top:56.45px;font-size:7px;color:#c4c4c4;font-weight:400;">Position</div>
<div class="t" style="left:773px;top:57.25px;font-size:7px;color:#b0b0b0;font-weight:400;">X</div>
<div class="a" style="left:779px;top:54.2px;width:76.5px;height:9.5px;background:#2a2a2a;border-radius:2px"></div>
<div class="t" style="left:781px;top:57.96px;font-size:6.8px;color:#c8c8c8;font-weight:400;">0</div>
<div class="t" style="left:861px;top:57.25px;font-size:7px;color:#b0b0b0;font-weight:400;">Y</div>
<div class="a" style="left:867px;top:54.2px;width:76px;height:9.5px;background:#2a2a2a;border-radius:2px"></div>
<div class="t" style="left:869px;top:57.96px;font-size:6.8px;color:#c8c8c8;font-weight:400;">0</div>
<div class="t" style="left:948px;top:57.25px;font-size:7px;color:#b0b0b0;font-weight:400;">Z</div>
<div class="a" style="left:954px;top:54.2px;width:70px;height:9.5px;background:#2a2a2a;border-radius:2px"></div>
<div class="t" style="left:956px;top:57.96px;font-size:6.8px;color:#c8c8c8;font-weight:400;">0</div>
<div class="t" style="left:587px;top:67.45px;font-size:7px;color:#c4c4c4;font-weight:400;">Rotation</div>
<div class="t" style="left:773px;top:68.25px;font-size:7px;color:#b0b0b0;font-weight:400;">X</div>
<div class="a" style="left:779px;top:65.2px;width:76.5px;height:9.5px;background:#2a2a2a;border-radius:2px"></div>
<div class="t" style="left:781px;top:68.96px;font-size:6.8px;color:#c8c8c8;font-weight:400;">-89.98</div>
<div class="t" style="left:861px;top:68.25px;font-size:7px;color:#b0b0b0;font-weight:400;">Y</div>
<div class="a" style="left:867px;top:65.2px;width:76px;height:9.5px;background:#2a2a2a;border-radius:2px"></div>
<div class="t" style="left:869px;top:68.96px;font-size:6.8px;color:#c8c8c8;font-weight:400;">0</div>
<div class="t" style="left:948px;top:68.25px;font-size:7px;color:#b0b0b0;font-weight:400;">Z</div>
<div class="a" style="left:954px;top:65.2px;width:70px;height:9.5px;background:#2a2a2a;border-radius:2px"></div>
<div class="t" style="left:956px;top:68.96px;font-size:6.8px;color:#c8c8c8;font-weight:400;">0</div>
<div class="t" style="left:587px;top:78.25px;font-size:7px;color:#c4c4c4;font-weight:400;">Scale</div>
<div class="t" style="left:773px;top:79.05px;font-size:7px;color:#b0b0b0;font-weight:400;">X</div>
<div class="a" style="left:779px;top:76px;width:76.5px;height:9.5px;background:#2a2a2a;border-radius:2px"></div>
<div class="t" style="left:781px;top:79.76px;font-size:6.8px;color:#c8c8c8;font-weight:400;">1</div>
<div class="t" style="left:861px;top:79.05px;font-size:7px;color:#b0b0b0;font-weight:400;">Y</div>
<div class="a" style="left:867px;top:76px;width:76px;height:9.5px;background:#2a2a2a;border-radius:2px"></div>
<div class="t" style="left:869px;top:79.76px;font-size:6.8px;color:#c8c8c8;font-weight:400;">1</div>
<div class="t" style="left:948px;top:79.05px;font-size:7px;color:#b0b0b0;font-weight:400;">Z</div>
<div class="a" style="left:954px;top:76px;width:70px;height:9.5px;background:#2a2a2a;border-radius:2px"></div>
<div class="t" style="left:956px;top:79.76px;font-size:6.8px;color:#c8c8c8;font-weight:400;">1</div>
<svg style="left:762px;top:78px" width="8" height="6"><circle cx="2.3" cy="3" r="1.8" stroke="#aaa" stroke-width="0.8" fill="none"/><circle cx="5.3" cy="3" r="1.8" stroke="#aaa" stroke-width="0.8" fill="none"/><path d="M1 0.5l6 5" stroke="#aaa" stroke-width="0.7"/></svg>
<div class="a" style="left:576px;top:88.5px;width:448px;height:1px;background:#2a2a2a;"></div>
<div class="a" style="left:576px;top:89.5px;width:448px;height:11.5px;background:#3e3e3e;"></div>
<svg style="left:579px;top:93px" width="6" height="5"><path d="M0.3 0.8h4.5l-2.25 3.2z" fill="#777"/></svg>
<svg style="left:587px;top:91px" width="9" height="9"><path d="M1 1h4l2 2v5H1z" fill="#6ab0e0"/><circle cx="5.5" cy="6" r="2" fill="#ddd" stroke="#333" stroke-width="0.6"/></svg>
<div class="a" style="left:598px;top:91.5px;width:7.5px;height:7.5px;background:#2a2a2a;"></div>
<svg style="left:598.5px;top:92px" width="7" height="7"><path d="M1.2 3.5l1.5 1.6 3-3.2" stroke="#e0e0e0" stroke-width="0.9" fill="none"/></svg>
<div class="t" style="left:609px;top:93.55px;font-size:7px;color:#d8d8d8;font-weight:700;">Skinned Mesh Renderer</div>
<svg style="left:1000px;top:91.8px" width="22" height="8"><circle cx="4" cy="4" r="3" fill="#ddd"/><path d="M3 3a1 1 0 1 1 1.3 1v0.8" stroke="#333" stroke-width="0.8" fill="none"/><path d="M12 2.5h6M16.5 1l1.5 1.5-1.5 1.5M18 5.5h-6M13.5 4l-1.5 1.5 1.5 1.5" stroke="#ddd" stroke-width="0.8" fill="none"/></svg>
<div class="a" style="left:770.4px;top:105px;width:16.4px;height:10.7px;background:#585858;border-radius:1.5px"></div>
<svg style="left:774px;top:106.5px" width="10" height="8"><path d="M1 7l3.5-5.5L8 7" stroke="#ccc" stroke-width="1" fill="none"/><circle cx="1.5" cy="6.5" r="1" fill="#ccc"/><circle cx="7.5" cy="6.5" r="1" fill="#ccc"/><circle cx="4.5" cy="1.8" r="1" fill="#ccc"/></svg>
<div class="t" style="left:791.3px;top:109.15px;font-size:7px;color:#c4c4c4;font-weight:400;">Edit Bounds</div>
<div class="t" style="left:587px;top:120.05px;font-size:7px;color:#c4c4c4;font-weight:400;">Bounds</div>
<div class="t" style="right:260px;top:130.75px;font-size:7px;color:#b8b8b8;font-weight:400">Center</div>
<div class="t" style="left:773px;top:131.25px;font-size:7px;color:#b0b0b0;font-weight:400;">X</div>
<div class="a" style="left:779px;top:128.2px;width:76.5px;height:9.5px;background:#2a2a2a;border-radius:2px"></div>
<div class="t" style="left:781px;top:131.96px;font-size:6.8px;color:#c8c8c8;font-weight:400;">6.126857e-05</div>
<div class="t" style="left:861px;top:131.25px;font-size:7px;color:#b0b0b0;font-weight:400;">Y</div>
<div class="a" style="left:867px;top:128.2px;width:76px;height:9.5px;background:#2a2a2a;border-radius:2px"></div>
<div class="t" style="left:869px;top:131.96px;font-size:6.8px;color:#c8c8c8;font-weight:400;">-0.01543799</div>
<div class="t" style="left:948px;top:131.25px;font-size:7px;color:#b0b0b0;font-weight:400;">Z</div>
<div class="a" style="left:954px;top:128.2px;width:70px;height:9.5px;background:#2a2a2a;border-radius:2px"></div>
<div class="t" style="left:956px;top:131.96px;font-size:6.8px;color:#c8c8c8;font-weight:400;">-0.004536628</div>
<div class="t" style="right:260px;top:141.75px;font-size:7px;color:#b8b8b8;font-weight:400">Extent</div>
<div class="t" style="left:773px;top:142.55px;font-size:7px;color:#b0b0b0;font-weight:400;">X</div>
<div class="a" style="left:779px;top:139.5px;width:76.5px;height:9.5px;background:#2a2a2a;border-radius:2px"></div>
<div class="t" style="left:781px;top:143.26px;font-size:6.8px;color:#c8c8c8;font-weight:400;">0.001334827</div>
<div class="t" style="left:861px;top:142.55px;font-size:7px;color:#b0b0b0;font-weight:400;">Y</div>
<div class="a" style="left:867px;top:139.5px;width:76px;height:9.5px;background:#2a2a2a;border-radius:2px"></div>
<div class="t" style="left:869px;top:143.26px;font-size:6.8px;color:#c8c8c8;font-weight:400;">0.02456853</div>
<div class="t" style="left:948px;top:142.55px;font-size:7px;color:#b0b0b0;font-weight:400;">Z</div>
<div class="a" style="left:954px;top:139.5px;width:70px;height:9.5px;background:#2a2a2a;border-radius:2px"></div>
<div class="t" style="left:956px;top:143.26px;font-size:6.8px;color:#c8c8c8;font-weight:400;">0.009496688</div>
<div class="t" style="left:587px;top:152.35px;font-size:7px;color:#c4c4c4;font-weight:400;">Quality</div>
<div class="a" style="left:771.5px;top:150.5px;width:252.5px;height:8.5px;background:#515151;"></div>
<div class="t" style="left:774px;top:152.55px;font-size:7px;color:#d0d0d0;font-weight:400;">Auto</div>
<div class="t" style="left:587px;top:163.15px;font-size:7px;color:#c4c4c4;font-weight:400;">Update When Offscreen</div>
<div class="a" style="left:771.5px;top:161.8px;width:7.2px;height:7.4px;background:#2e2e2e;"></div>
<div class="t" style="left:587px;top:174.05px;font-size:7px;color:#c4c4c4;font-weight:400;">Mesh</div>
<div class="a" style="left:771.5px;top:172px;width:247.5px;height:9px;background:#2a2a2a;"></div>
<svg style="left:773px;top:173.5px" width="6" height="6"><rect x="0.5" y="0.5" width="5" height="5" fill="#5a7f98"/><path d="M0.5 3h5M3 0.5v5" stroke="#9bc" stroke-width="0.5"/></svg>
<svg style="left:779.4px;top:0px" width="70.6" height="182.16"><text x="0" y="179.16" textLength="68.6" lengthAdjust="spacingAndGlyphs" font-family="Liberation Sans" font-size="7.4" font-weight="400" fill="#c8c8c8">EIGAFIRUMU  SHASHIN 3 .001</text></svg>
<svg style="left:1019px;top:173px" width="6" height="7"><circle cx="3" cy="3.5" r="2.3" stroke="#aaa" stroke-width="0.8" fill="none"/><circle cx="3" cy="3.5" r="0.8" fill="#aaa"/></svg>
<div class="t" style="left:587px;top:184.75px;font-size:7px;color:#c4c4c4;font-weight:400;">Root Bone</div>
<div class="a" style="left:771.5px;top:182.4px;width:247.5px;height:9px;background:#2a2a2a;"></div>
<svg style="left:773px;top:183.5px" width="6" height="6"><path d="M3 3V0.5" stroke="#6c6" stroke-width="0.9"/><path d="M3 3l-2.3 2.3" stroke="#48f" stroke-width="0.9"/><path d="M3 3l2.3 2.3" stroke="#e44" stroke-width="0.9"/></svg>
<div class="t" style="left:779.5px;top:185.06px;font-size:6.8px;color:#c8c8c8;font-weight:400;">Bone (Transform)</div>
<svg style="left:1019px;top:183.5px" width="6" height="7"><circle cx="3" cy="3.5" r="2.3" stroke="#aaa" stroke-width="0.8" fill="none"/><circle cx="3" cy="3.5" r="0.8" fill="#aaa"/></svg>
<div class="a" style="left:576px;top:192.5px;width:1.6px;height:10.0px;background:#2a6496;"></div>
<div class="a" style="left:576px;top:206px;width:1.6px;height:8.5px;background:#2a6496;"></div>
<div class="a" style="left:576px;top:216.5px;width:1.6px;height:9.0px;background:#2a6496;"></div>
<div class="a" style="left:576px;top:227px;width:1.6px;height:10px;background:#2a6496;"></div>
<div class="a" style="left:576px;top:238.5px;width:1.6px;height:10.0px;background:#2a6496;"></div>
<svg style="left:580px;top:195.7px" width="6" height="5"><path d="M0.3 0.8h4.5l-2.25 3.2z" fill="#777"/></svg>
<div class="t" style="left:587.3px;top:196.61px;font-size:6.9px;color:#d4d4d4;font-weight:400;">Materials</div>
<div class="a" style="left:1003.8px;top:193.3px;width:20.2px;height:9.3px;background:#2a2a2a;"></div>
<div class="t" style="left:1006.5px;top:195.86px;font-size:6.8px;color:#c8c8c8;font-weight:400;">4</div>
<div class="a" style="left:586.5px;top:204.9px;width:437.5px;height:46px;background:#3f3f3f;border:1px solid #2c2c2c;border-radius:2px"></div>
<svg style="left:589px;top:209.2px" width="7" height="5"><path d="M0 1.3h6M0 3.3h6" stroke="#666" stroke-width="0.7"/></svg>
<svg style="left:602.6px;top:0px" width="30.2" height="216.72"><text x="0" y="213.72" textLength="28.2" lengthAdjust="spacingAndGlyphs" font-family="Liberation Sans" font-size="7" font-weight="700" fill="#d4d4d4">Element 0</text></svg>
<div class="a" style="left:775.5px;top:207.39999999999998px;width:240.3px;height:8.8px;background:#2a2a2a;"></div>
<div class="a" style="left:777.5px;top:209.1px;width:5px;height:5px;border-radius:50%;background:radial-gradient(circle at 35% 35%,#cfe6ff 0,#4a90d0 55%,#1d3f66 100%)"></div>
<svg style="left:784px;top:0px" width="33" height="217.56"><text x="0" y="214.56" textLength="31" lengthAdjust="spacingAndGlyphs" font-family="Liberation Sans" font-size="7.4" font-weight="400" fill="#d0d0d0">EIGAFIRU</text></svg>
<svg style="left:1018px;top:208.2px" width="7" height="7"><circle cx="3" cy="3.5" r="2.3" stroke="#aaa" stroke-width="0.8" fill="none"/><circle cx="3" cy="3.5" r="0.8" fill="#aaa"/></svg>
<svg style="left:589px;top:219.9px" width="7" height="5"><path d="M0 1.3h6M0 3.3h6" stroke="#666" stroke-width="0.7"/></svg>
<svg style="left:602.6px;top:0px" width="30.2" height="227.42"><text x="0" y="224.42" textLength="28.2" lengthAdjust="spacingAndGlyphs" font-family="Liberation Sans" font-size="7" font-weight="700" fill="#d4d4d4">Element 1</text></svg>
<div class="a" style="left:775.5px;top:218.1px;width:240.3px;height:8.8px;background:#2a2a2a;"></div>
<div class="a" style="left:777.5px;top:219.8px;width:5px;height:5px;border-radius:50%;background:radial-gradient(circle at 35% 35%,#cfe6ff 0,#4a90d0 55%,#1d3f66 100%)"></div>
<svg style="left:784px;top:0px" width="128.5" height="228.12"><text x="0" y="225.12" textLength="126.5" lengthAdjust="spacingAndGlyphs" font-family="Liberation Sans" font-size="7" font-weight="400" fill="#d0d0d0">VRChat_2024-11-01_19-12-05.173_1280x720</text></svg>
<svg style="left:1018px;top:218.9px" width="7" height="7"><circle cx="3" cy="3.5" r="2.3" stroke="#aaa" stroke-width="0.8" fill="none"/><circle cx="3" cy="3.5" r="0.8" fill="#aaa"/></svg>
<svg style="left:589px;top:230.6px" width="7" height="5"><path d="M0 1.3h6M0 3.3h6" stroke="#666" stroke-width="0.7"/></svg>
<svg style="left:602.6px;top:0px" width="30.2" height="238.12"><text x="0" y="235.12" textLength="28.2" lengthAdjust="spacingAndGlyphs" font-family="Liberation Sans" font-size="7" font-weight="700" fill="#d4d4d4">Element 2</text></svg>
<div class="a" style="left:775.5px;top:228.79999999999998px;width:240.3px;height:8.8px;background:#2a2a2a;"></div>
<div class="a" style="left:777.5px;top:230.5px;width:5px;height:5px;border-radius:50%;background:radial-gradient(circle at 35% 35%,#cfe6ff 0,#4a90d0 55%,#1d3f66 100%)"></div>
<svg style="left:784px;top:0px" width="128.5" height="238.82"><text x="0" y="235.82" textLength="126.5" lengthAdjust="spacingAndGlyphs" font-family="Liberation Sans" font-size="7" font-weight="400" fill="#d0d0d0">VRChat_2024-11-01_19-12-05.173_1280x720</text></svg>
<svg style="left:1018px;top:229.6px" width="7" height="7"><circle cx="3" cy="3.5" r="2.3" stroke="#aaa" stroke-width="0.8" fill="none"/><circle cx="3" cy="3.5" r="0.8" fill="#aaa"/></svg>
<svg style="left:589px;top:241.3px" width="7" height="5"><path d="M0 1.3h6M0 3.3h6" stroke="#666" stroke-width="0.7"/></svg>
<svg style="left:602.6px;top:0px" width="30.2" height="248.82"><text x="0" y="245.82" textLength="28.2" lengthAdjust="spacingAndGlyphs" font-family="Liberation Sans" font-size="7" font-weight="700" fill="#d4d4d4">Element 3</text></svg>
<div class="a" style="left:775.5px;top:239.5px;width:240.3px;height:8.8px;background:#2a2a2a;"></div>
<div class="a" style="left:777.5px;top:241.20000000000002px;width:5px;height:5px;border-radius:50%;background:radial-gradient(circle at 35% 35%,#cfe6ff 0,#4a90d0 55%,#1d3f66 100%)"></div>
<svg style="left:784px;top:0px" width="128.5" height="249.52"><text x="0" y="246.52" textLength="126.5" lengthAdjust="spacingAndGlyphs" font-family="Liberation Sans" font-size="7" font-weight="400" fill="#d0d0d0">VRChat_2024-11-01_19-12-05.173_1280x720</text></svg>
<svg style="left:1018px;top:240.3px" width="7" height="7"><circle cx="3" cy="3.5" r="2.3" stroke="#aaa" stroke-width="0.8" fill="none"/><circle cx="3" cy="3.5" r="0.8" fill="#aaa"/></svg>
<div class="a" style="left:994px;top:250.8px;width:30px;height:10.5px;background:#3f3f3f;border:1px solid #2c2c2c;border-top:none"></div>
<svg style="left:998px;top:252px" width="24" height="8"><path d="M1 4h6M4 1v6" stroke="#ddd" stroke-width="0.9"/><path d="M13 4h5" stroke="#ddd" stroke-width="0.9"/></svg>
<svg style="left:580px;top:266.0px" width="6" height="5"><path d="M0.3 0.8h4.5l-2.25 3.2z" fill="#777"/></svg>
<div class="t" style="left:587px;top:266.25px;font-size:7px;color:#d8d8d8;font-weight:700;">Lighting</div>
<div class="t" style="left:595px;top:276.35px;font-size:7px;color:#c4c4c4;font-weight:400;">Cast Shadows</div>
<div class="a" style="left:771px;top:274.8px;width:253px;height:7.6px;background:#515151;"></div>
<div class="t" style="left:773.5px;top:276.35px;font-size:7px;color:#d0d0d0;font-weight:400;">On</div>
<div class="t" style="left:595px;top:287.15px;font-size:7px;color:#c4c4c4;font-weight:400;">Receive Shadows</div>
<div class="a" style="left:771.3px;top:285.4px;width:7.2px;height:7.6px;background:#2a2a2a;"></div>
<svg style="left:771.8px;top:285.9px" width="7" height="7"><path d="M1.2 3.5l1.5 1.6 3-3.2" stroke="#e8e8e8" stroke-width="0.9" fill="none"/></svg>
<svg style="left:580px;top:298.3px" width="6" height="5"><path d="M0.3 0.8h4.5l-2.25 3.2z" fill="#777"/></svg>
<div class="t" style="left:587px;top:298.55px;font-size:7px;color:#d8d8d8;font-weight:700;">Probes</div>
<div class="t" style="left:595px;top:309.05px;font-size:7px;color:#c4c4c4;font-weight:400;">Light Probes</div>
<div class="a" style="left:771px;top:307.3px;width:253px;height:7.6px;background:#515151;"></div>
<div class="t" style="left:773.5px;top:308.85px;font-size:7px;color:#d0d0d0;font-weight:400;">Blend Probes</div>
<div class="t" style="left:595px;top:319.75px;font-size:7px;color:#c4c4c4;font-weight:400;">Reflection Probes</div>
<div class="a" style="left:771px;top:317.9px;width:253px;height:7.6px;background:#515151;"></div>
<div class="t" style="left:773.5px;top:319.45px;font-size:7px;color:#d0d0d0;font-weight:400;">Blend Probes</div>
<div class="t" style="left:595px;top:330.45px;font-size:7px;color:#c4c4c4;font-weight:400;">Anchor Override</div>
<div class="a" style="left:771px;top:328.5px;width:247.5px;height:8px;background:#2a2a2a;"></div>
<div class="t" style="left:773.5px;top:330.46px;font-size:6.8px;color:#c8c8c8;font-weight:400;">None (Transform)</div>
<svg style="left:1019px;top:329px" width="6" height="7"><circle cx="3" cy="3.5" r="2.3" stroke="#aaa" stroke-width="0.8" fill="none"/></svg>
<svg style="left:580px;top:341.5px" width="6" height="5"><path d="M0.3 0.8h4.5l-2.25 3.2z" fill="#777"/></svg>
<div class="t" style="left:587px;top:341.75px;font-size:7px;color:#d8d8d8;font-weight:700;">Additional Settings</div>
<div class="t" style="left:595px;top:352.15px;font-size:7px;color:#c4c4c4;font-weight:400;">Skinned Motion Vectors</div>
<div class="a" style="left:771.3px;top:350.4px;width:7.2px;height:7.6px;background:#2a2a2a;"></div>
<svg style="left:771.8px;top:350.9px" width="7" height="7"><path d="M1.2 3.5l1.5 1.6 3-3.2" stroke="#e8e8e8" stroke-width="0.9" fill="none"/></svg>
<div class="t" style="left:595px;top:362.95px;font-size:7px;color:#c4c4c4;font-weight:400;">Dynamic Occlusion</div>
<div class="a" style="left:771.3px;top:361.2px;width:7.2px;height:7.6px;background:#2a2a2a;"></div>
<svg style="left:771.8px;top:361.7px" width="7" height="7"><path d="M1.2 3.5l1.5 1.6 3-3.2" stroke="#e8e8e8" stroke-width="0.9" fill="none"/></svg>
<div class="a" style="left:576px;top:374px;width:448px;height:1px;background:#2a2a2a;"></div>
<div class="a" style="left:576px;top:375px;width:448px;height:29px;background:#3a3a3a;"></div>
<div class="a" style="left:576px;top:404px;width:448px;height:1px;background:#2a2a2a;"></div>
<div class="a" style="left:576px;top:405px;width:448px;height:4.5px;background:#383838;"></div>
<div class="a" style="left:576px;top:409.5px;width:448px;height:1px;background:#2a2a2a;"></div>
<div class="a" style="left:576px;top:410.5px;width:448px;height:29px;background:#3a3a3a;"></div>
<div class="a" style="left:576px;top:439.5px;width:448px;height:1px;background:#2a2a2a;"></div>
<div class="a" style="left:576px;top:445px;width:448px;height:1px;background:#2a2a2a;"></div>
<div class="a" style="left:585.5px;top:378px;width:16px;height:16px;border-radius:50%;background:radial-gradient(circle at 40% 35%,#707070 0,#5e5e5e 45%,#464646 85%,#3a3a3a 100%)"></div>
<svg style="left:580px;top:395px" width="5" height="6"><path d="M0.5 0.5v5l4-2.5z" fill="#777"/></svg>
<div class="t" style="left:606.8px;top:379.25px;font-size:7.9px;color:#b8b8b8;font-weight:400;">VRChat_2024-11-01_19-12-05.173_1280x720 (Material)</div>
<svg style="left:1000px;top:378px" width="22" height="8"><circle cx="4" cy="4" r="3" fill="#ddd"/><path d="M3 3a1 1 0 1 1 1.3 1v0.8" stroke="#333" stroke-width="0.8" fill="none"/><path d="M12 2.5h6M16.5 1l1.5 1.5-1.5 1.5M18 5.5h-6M13.5 4l-1.5 1.5 1.5 1.5" stroke="#ddd" stroke-width="0.8" fill="none"/></svg>
<div class="t" style="left:605.5px;top:392.75px;font-size:7px;color:#b8b8b8;font-weight:400;">Shader</div>
<div class="a" style="left:633px;top:392px;width:343px;height:7.8px;background:#515151;"></div>
<div class="t" style="left:635.5px;top:393.05px;font-size:7px;color:#d0d0d0;font-weight:400;">Standard</div>
<svg style="left:970px;top:395px" width="5" height="3"><path d="M0 0h4l-2 2.5z" fill="#ddd"/></svg>
<div class="a" style="left:980px;top:391px;width:24.2px;height:8px;background:#585858;border-radius:1.5px"></div>
<div class="t" style="left:983px;top:393.06px;font-size:6.8px;color:#d0d0d0;font-weight:400;">Edit...</div>
<div class="a" style="left:1007px;top:391px;width:17px;height:8px;background:#4a4a4a;border-radius:1.5px"></div>
<svg style="left:1010px;top:392.5px" width="14" height="6"><path d="M0.5 0.5h6M0.5 2.5h6M2 4.5h4.5" stroke="#999" stroke-width="0.7"/><path d="M10 2h3l-1.5 2z" fill="#999"/></svg>
<svg style="left:585px;top:414.0px" width="17" height="17"><defs><clipPath id="ms410"><circle cx="8.5" cy="8.5" r="8"/></clipPath><linearGradient id="msk410" x1="0" y1="0" x2="0" y2="1"><stop offset="0" stop-color="#4e5e6c"/><stop offset="1" stop-color="#94a4b0"/></linearGradient><radialGradient id="msr410" cx="0.5" cy="0.5" r="0.5"><stop offset="0.6" stop-color="#000" stop-opacity="0"/><stop offset="1" stop-color="#000" stop-opacity="0.5"/></radialGradient></defs><g clip-path="url(#ms410)"><rect width="17" height="9" fill="url(#msk410)"/><rect y="9" width="17" height="8" fill="#5a5650"/><path d="M7 12l9-2v1.5l-7 1.5v4H7z" fill="#111"/><circle cx="8.5" cy="8.5" r="8" fill="url(#msr410)"/></g><circle cx="5.5" cy="5.5" r="1.1" fill="#e8f0f8"/><circle cx="15" cy="10" r="0.8" fill="#ddd"/></svg>
<svg style="left:580px;top:430.5px" width="5" height="6"><path d="M0.5 0.5v5l4-2.5z" fill="#777"/></svg>
<svg style="left:606.8px;top:0px" width="72.5" height="423.34"><text x="0" y="420.34" textLength="70.5" lengthAdjust="spacingAndGlyphs" font-family="Liberation Sans" font-size="7.9" font-weight="400" fill="#b8b8b8">EIGAFIRU (Material)</text></svg>
<svg style="left:1000px;top:413.5px" width="22" height="8"><circle cx="4" cy="4" r="3" fill="#ddd"/><path d="M3 3a1 1 0 1 1 1.3 1v0.8" stroke="#333" stroke-width="0.8" fill="none"/><path d="M12 2.5h6M16.5 1l1.5 1.5-1.5 1.5M18 5.5h-6M13.5 4l-1.5 1.5 1.5 1.5" stroke="#ddd" stroke-width="0.8" fill="none"/></svg>
<div class="t" style="left:605.5px;top:428.25px;font-size:7px;color:#b8b8b8;font-weight:400;">Shader</div>
<div class="a" style="left:633px;top:427.5px;width:343px;height:7.8px;background:#515151;"></div>
<div class="t" style="left:635.5px;top:428.55px;font-size:7px;color:#d0d0d0;font-weight:400;">Standard</div>
<svg style="left:970px;top:430.5px" width="5" height="3"><path d="M0 0h4l-2 2.5z" fill="#ddd"/></svg>
<div class="a" style="left:980px;top:426.5px;width:24.2px;height:8px;background:#585858;border-radius:1.5px"></div>
<div class="t" style="left:983px;top:428.56px;font-size:6.8px;color:#d0d0d0;font-weight:400;">Edit...</div>
<div class="a" style="left:1007px;top:426.5px;width:17px;height:8px;background:#4a4a4a;border-radius:1.5px"></div>
<svg style="left:1010px;top:428.0px" width="14" height="6"><path d="M0.5 0.5h6M0.5 2.5h6M2 4.5h4.5" stroke="#999" stroke-width="0.7"/><path d="M10 2h3l-1.5 2z" fill="#999"/></svg>
<div class="a" style="left:743px;top:450px;width:123px;height:12px;background:#585858;border-radius:1.5px"></div>
<div class="t" style="left:778.5px;top:453.95px;font-size:7px;color:#d0d0d0;font-weight:400;">Add Component</div>
<svg style="left:0;top:0" width="1024" height="499"><path d="M260 363 C260.05 360.00 260.00 350.50 260.30 345.00 C260.60 339.50 261.13 334.67 261.80 330.00 C262.47 325.33 263.27 321.33 264.30 317.00 C265.33 312.67 266.63 308.50 268.00 304.00 C269.37 299.50 270.83 295.00 272.50 290.00 C274.17 285.00 275.67 280.67 278.00 274.00 C280.33 267.33 284.17 256.33 286.50 250.00 C288.83 243.67 290.08 240.50 292.00 236.00 C293.92 231.50 295.67 227.17 298.00 223.00 C300.33 218.83 303.17 215.42 306.00 211.00 C308.83 206.58 312.03 201.50 315.00 196.50 C317.97 191.50 320.80 185.33 323.80 181.00 C326.80 176.67 330.30 173.58 333.00 170.50 C335.70 167.42 336.70 165.53 340.00 162.50 C343.30 159.47 348.25 156.85 352.80 152.30 C357.35 147.75 362.18 140.15 367.30 135.20 C372.42 130.25 378.88 125.60 383.50 122.60 C388.12 119.60 391.58 119.07 395.00 117.20 C398.42 115.33 402.50 112.37 404.00 111.40" stroke="#d8262e" stroke-width="1.6" fill="none" stroke-linecap="round" stroke-linejoin="round"/><path d="M401.6 108.2L412.1 113.4L405.7 119.9" stroke="#d8262e" stroke-width="1.6" fill="none" stroke-linecap="round" stroke-linejoin="round"/><path d="M261 363 C259.87 363.00 257.15 362.78 254.20 363.00 C251.25 363.22 247.22 363.48 243.30 364.30 C239.38 365.12 234.30 366.40 230.70 367.90 C227.10 369.40 224.12 370.90 221.70 373.30 C219.28 375.70 217.42 379.28 216.20 382.30 C214.98 385.32 214.25 388.38 214.40 391.40 C214.55 394.42 215.58 397.70 217.10 400.40 C218.62 403.10 221.08 405.65 223.50 407.60 C225.92 409.55 228.90 411.20 231.60 412.10 C234.30 413.00 238.35 412.85 239.70 413.00" stroke="#d8262e" stroke-width="1.6" fill="none" stroke-linecap="round"/><path d="M244.2 412.1 C246.17 411.65 251.93 410.45 256.00 409.40 C260.07 408.35 265.00 407.30 268.60 405.80 C272.20 404.30 275.35 402.80 277.60 400.40 C279.85 398.00 281.20 394.42 282.10 391.40 C283.00 388.38 283.45 385.32 283.00 382.30 C282.55 379.28 281.20 375.85 279.40 373.30 C277.60 370.75 275.20 368.72 272.20 367.00 C269.20 365.28 263.20 363.67 261.40 363.00" stroke="#d8262e" stroke-width="1.6" fill="none" stroke-linecap="round"/><ellipse cx="41.5" cy="415.5" rx="21.5" ry="4.3" stroke="#d8262e" stroke-width="1.6" fill="none"/></svg>
</body></html>
